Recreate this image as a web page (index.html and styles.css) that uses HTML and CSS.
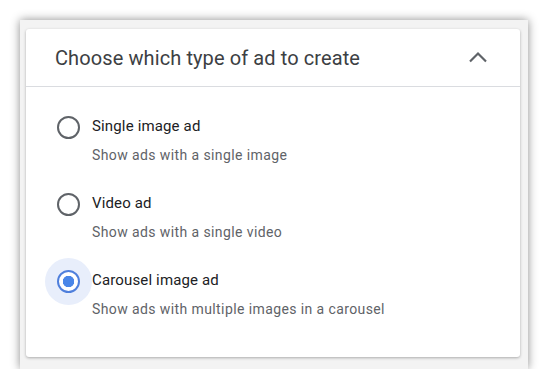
FILE: index.html
```html
<!DOCTYPE html>
<html>

<head>
  <title>Ad type</title>
  <meta name="viewport" content="width=device-width, initial-scale=1.0">
  <link rel="stylesheet" href="styles.css">
</head>

<body>
  <div class="frame">
    <div class="card">
      <div class="card-header">
        <h2>Choose which type of ad to create</h2>
        <svg class="chevron" width="24" height="24" viewBox="0 0 24 24">
          <path d="M4 15.5 L12 7.5 L20 15.5" fill="none" stroke="#5f6368" stroke-width="2.2"/>
        </svg>
      </div>

      <div class="options">
        <label class="option">
          <span class="radio"></span>
          <span class="text">
            <span class="title">Single image ad</span>
            <span class="desc">Show ads with a single image</span>
          </span>
        </label>

        <label class="option">
          <span class="radio"></span>
          <span class="text">
            <span class="title">Video ad</span>
            <span class="desc">Show ads with a single video</span>
          </span>
        </label>

        <label class="option checked">
          <span class="radio"></span>
          <span class="text">
            <span class="title">Carousel image ad</span>
            <span class="desc">Show ads with multiple images in a carousel</span>
          </span>
        </label>
      </div>
    </div>
  </div>
</body>

</html>
```

FILE: styles.css
```css
body {
  font-family: Roboto, 'Liberation Sans', sans-serif;
  background: #ffffff;
  margin: 0;
  padding: 20px 0 0 20px;
}

.frame {
  width: 508px;
  height: 349px;
  box-sizing: border-box;
  padding: 9px 8px 12px 6px;
  background: #f3f3f3;
  box-shadow: 0 0 9px rgba(0, 0, 0, 0.45);
}

.card {
  background: white;
  height: 100%;
  border-radius: 3px;
  box-shadow: 0 1px 3px rgba(0, 0, 0, 0.3);
}

.card-header {
  display: flex;
  align-items: center;
  justify-content: space-between;
  height: 57px;
  padding: 0 30px 0 29px;
  border-bottom: 1px solid #dadce0;
}

h2 {
  margin: 0;
  font-size: 20px;
  font-weight: 400;
  letter-spacing: 0.1px;
  color: #3c4043;
}

.chevron {
  display: block;
}

.options {
  display: flex;
  flex-direction: column;
  gap: 28px;
  padding: 29px 0 0 31px;
}

.option {
  display: flex;
  align-items: flex-start;
  gap: 12px;
  cursor: pointer;
}

.radio {
  width: 19px;
  height: 19px;
  margin-top: 0;
  border: 2.5px solid #5f6368;
  border-radius: 50%;
  flex-shrink: 0;
}

.option.checked .radio {
  border-color: #4f7fdc;
  box-shadow: 0 0 0 12px #e8eefb;
  background: radial-gradient(circle, #4a86e8 0 5.5px, white 6px);
}

.text {
  display: flex;
  flex-direction: column;
  gap: 9px;
}

.title {
  font-size: 15px;
  letter-spacing: 0.15px;
  color: #202124;
  line-height: 20px;
}

.desc {
  font-size: 14px;
  color: #5f6368;
  letter-spacing: 0.4px;
  line-height: 20px;
}
```
